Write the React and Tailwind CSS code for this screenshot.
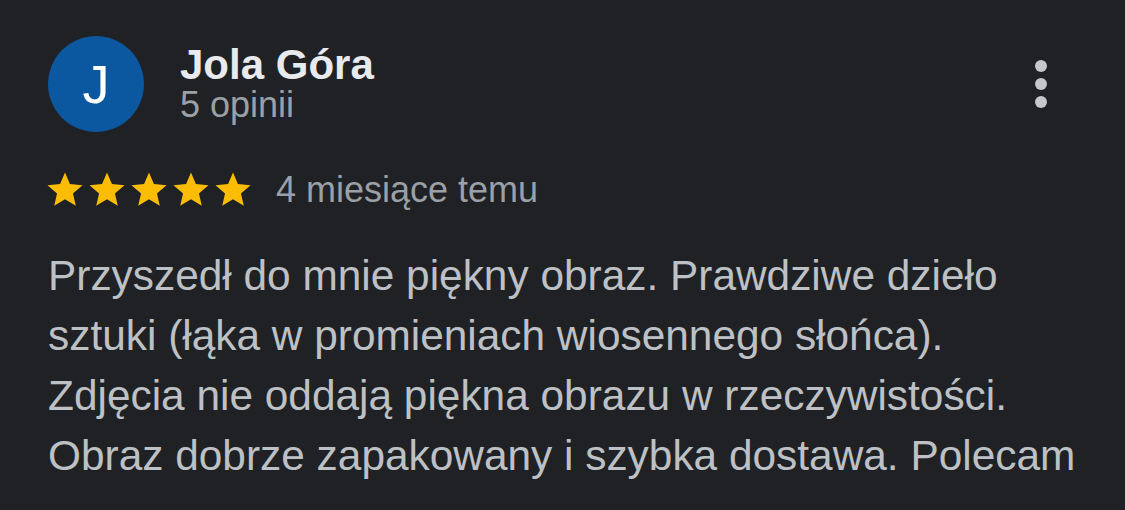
import React from 'react';

const Star = () => (
  <svg viewBox="0 0 24 24" className="w-[42px] h-[42px] shrink-0" fill="#fbbc04">
    <path d="M12 17.27L18.18 21l-1.64-7.03L22 9.24l-7.19-.61L12 2 9.19 8.63 2 9.24l5.46 4.73L5.82 21z" />
  </svg>
);

const App = () => {
  const review =
    'Przyszedł do mnie piękny obraz. Prawdziwe dzieło sztuki (łąka w promieniach wiosennego słońca). Zdjęcia nie oddają piękna obrazu w rzeczywistości. Obraz dobrze zapakowany i szybka dostawa. Polecam';

  return (
    <div
      className="w-full h-[510px] overflow-hidden bg-[#202124] px-[48px] pt-[36px]"
      style={{ fontFamily: '"Liberation Sans", Arial, sans-serif' }}
    >
      {/* header */}
      <div className="flex items-start">
        <div className="w-[96px] h-[96px] rounded-full bg-[#0b57a0] flex items-center justify-center shrink-0">
          <span className="text-white text-[54px] leading-none">J</span>
        </div>
        <div className="ml-[36px] pt-[7px] flex flex-col">
          <span className="text-[#e8eaed] text-[42px] leading-[44px] font-bold">Jola Góra</span>
          <span className="text-[#9aa0a6] text-[36px] leading-[36px]">5 opinii</span>
        </div>
        <button className="ml-auto mr-[30px] mt-[24px] flex flex-col gap-[6px]">
          <span className="w-[12px] h-[12px] rounded-full bg-[#c4c7cc]" />
          <span className="w-[12px] h-[12px] rounded-full bg-[#c4c7cc]" />
          <span className="w-[12px] h-[12px] rounded-full bg-[#c4c7cc]" />
        </button>
      </div>

      {/* rating */}
      <div className="flex items-start mt-[37px] -ml-[4px]">
        <div className="flex">
          <Star />
          <Star />
          <Star />
          <Star />
          <Star />
        </div>
        <span className="ml-[22px] text-[#9aa0a6] text-[36px] leading-[42px]">4 miesiące temu</span>
      </div>

      {/* body */}
      <p className="mt-[35px] text-[#bdc1c6] text-[42.4px] leading-[60px]">{review}</p>
    </div>
  );
};

export default App;
